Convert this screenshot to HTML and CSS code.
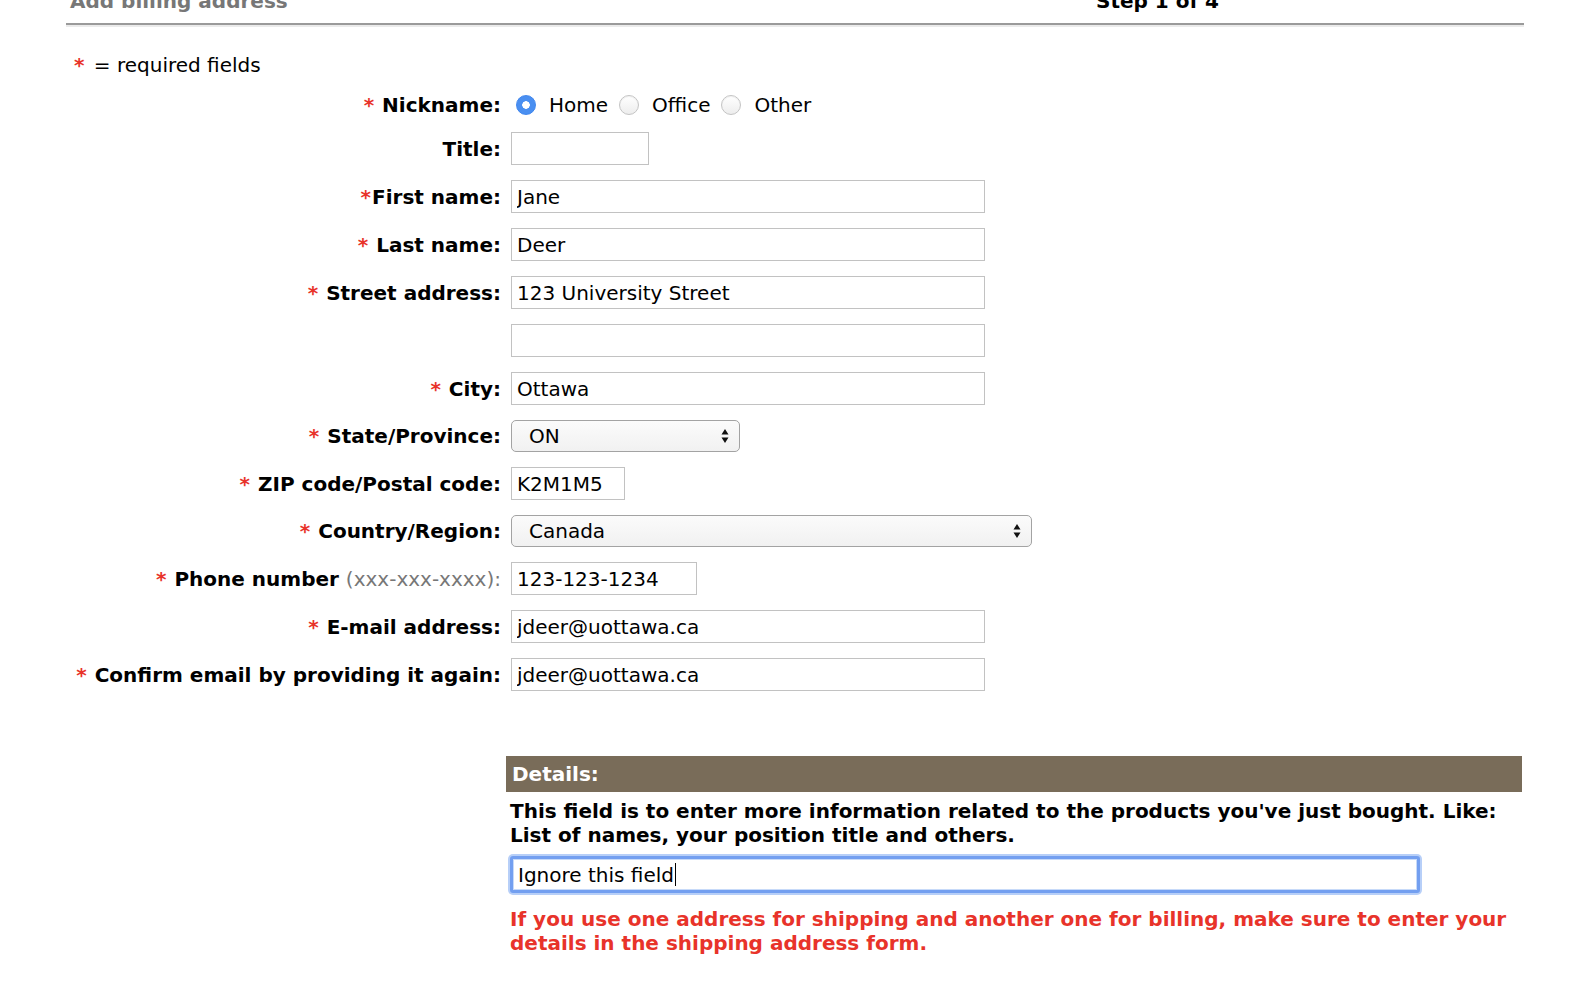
FILE: index.html
```html
<!DOCTYPE html>
<html lang="en">
<head>
<meta charset="utf-8">
<title>Add billing address</title>
<link rel="stylesheet" href="styles.css">
</head>
<body>
<div class="page">
  <div class="header">
    <div class="header-title">Add billing address</div>
    <div class="header-step">Step 1 of 4</div>
  </div>

  <p class="legend"><span class="req">*</span> = required fields</p>

  <form class="form">
    <div class="label"><span class="req">*</span> Nickname:</div>
    <div class="radios">
      <label class="radio"><input type="radio" name="nick" checked> Home</label>
      <label class="radio"><input type="radio" name="nick"> Office</label>
      <label class="radio"><input type="radio" name="nick"> Other</label>
    </div>

    <div class="label">Title:</div>
    <div><input class="text w-title" type="text" value=""></div>

    <div class="label"><span class="req">*</span>First name:</div>
    <div><input class="text w-full" type="text" value="Jane"></div>

    <div class="label"><span class="req">*</span> Last name:</div>
    <div><input class="text w-full" type="text" value="Deer"></div>

    <div class="label"><span class="req">*</span> Street address:</div>
    <div><input class="text w-full" type="text" value="123 University Street"></div>

    <div class="label"></div>
    <div><input class="text w-full" type="text" value=""></div>

    <div class="label"><span class="req">*</span> City:</div>
    <div><input class="text w-full" type="text" value="Ottawa"></div>

    <div class="label"><span class="req">*</span> State/Province:</div>
    <div>
      <span class="select-wrap w-state">
        <select class="select"><option>ON</option></select>
        <svg class="arrows" width="8" height="16" viewBox="0 0 8 16" aria-hidden="true"><path d="M4 1 L7.5 6.5 L0.5 6.5 Z M4 15 L7.5 9.5 L0.5 9.5 Z" fill="#111"/></svg>
      </span>
    </div>

    <div class="label"><span class="req">*</span> ZIP code/Postal code:</div>
    <div><input class="text w-zip" type="text" value="K2M1M5"></div>

    <div class="label"><span class="req">*</span> Country/Region:</div>
    <div>
      <span class="select-wrap w-country">
        <select class="select"><option>Canada</option></select>
        <svg class="arrows" width="8" height="16" viewBox="0 0 8 16" aria-hidden="true"><path d="M4 1 L7.5 6.5 L0.5 6.5 Z M4 15 L7.5 9.5 L0.5 9.5 Z" fill="#111"/></svg>
      </span>
    </div>

    <div class="label"><span class="req">*</span> Phone number <span class="hint">(xxx-xxx-xxxx):</span></div>
    <div><input class="text w-phone" type="text" value="123-123-1234"></div>

    <div class="label"><span class="req">*</span> E-mail address:</div>
    <div><input class="text w-full" type="text" value="jdeer@uottawa.ca"></div>

    <div class="label"><span class="req">*</span> Confirm email by providing it again:</div>
    <div><input class="text w-full" type="text" value="jdeer@uottawa.ca"></div>
  </form>

  <section class="details">
    <div class="details-bar">Details:</div>
    <p class="details-text">This field is to enter more information related to the products you've just bought. Like:<br>List of names, your position title and others.</p>
    <div class="focus-field" role="textbox">Ignore this field<span class="caret"></span></div>
    <p class="warning">If you use one address for shipping and another one for billing, make sure to enter your<br>details in the shipping address form.</p>
  </section>
</div>
</body>
</html>
```

FILE: styles.css
```css
html, body {
  margin: 0;
  padding: 0;
  background: #ffffff;
}

body {
  font-family: "DejaVu Sans", Verdana, sans-serif;
  font-size: 20px;
  color: #000;
}

.page {
  margin: -10px 0 0 66px;
  width: 1458px;
}

.header {
  display: grid;
  grid-template-columns: 1fr 1fr;
  padding: 0 4px 10px;
  border-bottom: 2px solid #9a9a9a;
  box-shadow: 0 2px 0 #ebebeb;
  font-weight: bold;
  line-height: 23px;
}

.header-title {
  color: #777;
}

.header-step {
  text-align: center;
  color: #000;
}

.legend {
  margin: 29px 0 0 7px;
  line-height: 23px;
}

.legend .req {
  margin-right: 2px;
}

.req {
  color: #e8332a;
  font-weight: bold;
  padding: 0 1px;
}

.form {
  display: grid;
  grid-template-columns: 435px 1fr;
  column-gap: 10px;
  row-gap: 15px;
  align-items: center;
  margin-top: 15px;
}

.label {
  text-align: right;
  font-weight: bold;
  white-space: nowrap;
  line-height: 24px;
}

.hint {
  font-weight: normal;
  color: #777;
}

.radios {
  display: flex;
  align-items: center;
  height: 25px;
  gap: 11px;
  padding-left: 5px;
}

.radio {
  display: flex;
  align-items: center;
  gap: 13px;
}

.radio input {
  appearance: none;
  -webkit-appearance: none;
  margin: 0;
  width: 20px;
  height: 20px;
  border-radius: 50%;
  border: 1px solid #c4c4c4;
  background: linear-gradient(#ffffff, #ededed);
  box-shadow: inset 0 1px 1px rgba(0,0,0,0.06);
}

.radio input:checked {
  border-color: #3f86ee;
  background: radial-gradient(circle, #ffffff 0 3.5px, #4a8ff1 4px);
  box-shadow: none;
}

.text {
  box-sizing: border-box;
  height: 33px;
  margin: 0;
  padding: 0 5px;
  border: 1px solid #c2c2c2;
  border-radius: 0;
  font-family: inherit;
  font-size: 20px;
  color: #000;
  background: #fff;
  outline: none;
  vertical-align: middle;
}

.w-title { width: 138px; }
.w-full { width: 474px; }
.w-zip { width: 114px; }
.w-phone { width: 186px; }

.select-wrap {
  position: relative;
  display: inline-block;
  vertical-align: middle;
}

.w-state { width: 229px; }
.w-country { width: 521px; }

.select {
  appearance: none;
  -webkit-appearance: none;
  box-sizing: border-box;
  display: block;
  width: 100%;
  height: 32px;
  margin: 0;
  padding: 0 0 0 17px;
  border: 1px solid #a3a3a3;
  border-radius: 5px;
  background: linear-gradient(#fbfbfb, #f1f1f1);
  font-family: inherit;
  font-size: 20px;
  color: #000;
}

.arrows {
  position: absolute;
  right: 11px;
  top: 8px;
  pointer-events: none;
}

.details {
  margin: 65px 0 0 440px;
  width: 1016px;
}

.details-bar {
  background: #796c59;
  color: #fff;
  font-weight: bold;
  height: 36px;
  line-height: 37px;
  padding-left: 6px;
}

.details-text {
  margin: 7px 0 0 4px;
  font-weight: bold;
  line-height: 24px;
}

.focus-field {
  box-sizing: border-box;
  width: 910px;
  height: 37px;
  margin: 9px 0 0 4px;
  padding: 0 5px;
  border: 3px solid #739ff0;
  border-radius: 3px;
  box-shadow: 0 0 0 2px #b7cff8, inset 0 0 0 1px #c7daf9;
  background: #fff;
  display: flex;
  align-items: center;
}

.caret {
  display: inline-block;
  width: 1.5px;
  height: 23px;
  background: #000;
  margin-left: 1px;
}

.warning {
  margin: 14px 0 0 4px;
  color: #e8332a;
  font-weight: bold;
  line-height: 24px;
}
```
